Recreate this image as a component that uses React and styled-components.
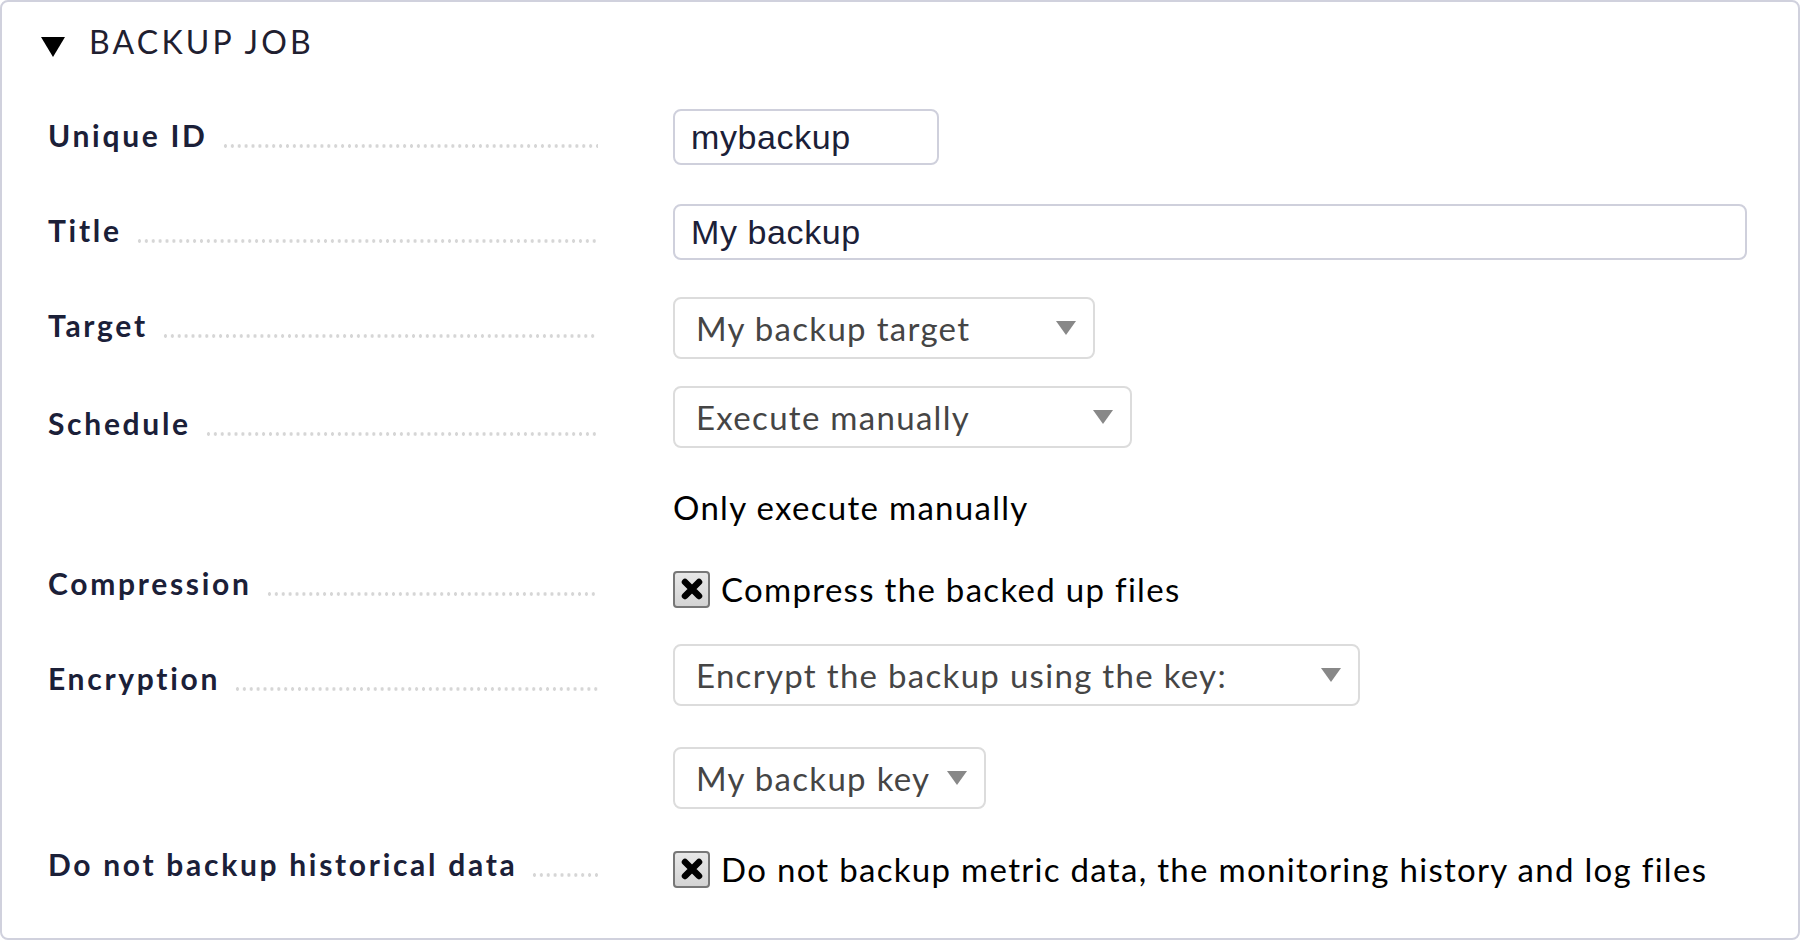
import React from "react";
import styled, { createGlobalStyle } from "styled-components";

const GlobalStyle = createGlobalStyle`
  body {
    margin: 0;
    background: #ffffff;
    font-family: Lato, "Noto Sans", sans-serif;
  }
`;

function Checkbox() {
  return (
    <Box>
      <svg width="22" height="22" viewBox="0 0 22 22">
        <path d="M4 4 L18 18 M18 4 L4 18" stroke="#000" strokeWidth="6.5" strokeLinecap="round" />
      </svg>
    </Box>
  );
}

function Select({ value, width }) {
  return (
    <SelectBox $width={width}>
      <span>{value}</span>
      <Arrow />
    </SelectBox>
  );
}

function Field({ label, offset = 10, gap, children }) {
  return (
    <Row $gap={gap}>
      <Label $offset={offset}>
        <span>{label}</span>
        <Dots />
      </Label>
      <Content>{children}</Content>
    </Row>
  );
}

export default function App() {
  return (
    <>
      <GlobalStyle />
      <Panel>
        <Header>
          <Toggle />
          <h2>BACKUP JOB</h2>
        </Header>
        <Form>
          <Field label="Unique ID" gap={47}>
            <TextInput $width={266}>mybackup</TextInput>
          </Field>
          <Field label="Title" gap={39}>
            <TextInput $width={1074}>My backup</TextInput>
          </Field>
          <Field label="Target" offset={12} gap={37}>
            <Select value="My backup target" width={422} />
          </Field>
          <Field label="Schedule" offset={21} gap={27}>
            <Select value="Execute manually" width={459} />
            <Help>Only execute manually</Help>
          </Field>
          <Field label="Compression" offset={5} gap={35}>
            <CheckLine>
              <Checkbox />
              <span>Compress the backed up files</span>
            </CheckLine>
          </Field>
          <Field label="Encryption" offset={18} gap={35}>
            <Select value="Encrypt the backup using the key:" width={687} />
            <Nested>
              <Select value="My backup key" width={313} />
            </Nested>
          </Field>
          <Field label="Do not backup historical data" offset={6} gap={33}>
            <CheckLine>
              <Checkbox />
              <span>Do not backup metric data, the monitoring history and log files</span>
            </CheckLine>
          </Field>
        </Form>
      </Panel>
    </>
  );
}

const Panel = styled.div`
  box-sizing: border-box;
  width: 1800px;
  height: 940px;
  border: 2px solid #d0d1dd;
  border-radius: 8px;
  padding-top: 20px;
`;

const Header = styled.div`
  display: flex;
  align-items: center;
  gap: 24px;
  padding-left: 39px;
  height: 40px;

  h2 {
    margin: 0;
    font-size: 32px;
    line-height: 40px;
    font-weight: 400;
    letter-spacing: 3.2px;
    color: #1f2030;
  }
`;

const Toggle = styled.div`
  width: 0;
  height: 0;
  margin-top: 10px;
  border-left: 12px solid transparent;
  border-right: 12px solid transparent;
  border-top: 20px solid #000;
`;

const Form = styled.div`
  padding-left: 46px;
`;

const Row = styled.div`
  display: grid;
  grid-template-columns: 550px 1fr;
  column-gap: 75px;
  align-items: start;
  margin-top: ${(p) => p.$gap}px;
`;

const Label = styled.div`
  display: flex;
  align-items: flex-end;
  padding-top: ${(p) => p.$offset}px;
  font-size: 30px;
  line-height: 32px;
  font-weight: 700;
  letter-spacing: 2.7px;
  color: #1b2038;
  white-space: nowrap;
`;

const Dots = styled.div`
  flex: 1;
  height: 4px;
  margin: 0 0 3px 14px;
  background-image: radial-gradient(circle, #d6d6d6 1.5px, transparent 2px);
  background-size: 6.9px 4px;
  background-repeat: repeat-x;
`;

const Content = styled.div`
  display: flex;
  flex-direction: column;
  align-items: flex-start;
`;

const TextInput = styled.div`
  box-sizing: border-box;
  width: ${(p) => p.$width}px;
  height: 56px;
  border: 2px solid #cfd0dc;
  border-radius: 8px;
  padding-left: 16px;
  display: flex;
  align-items: center;
  font-family: "Liberation Sans", Arial, sans-serif;
  font-size: 34px;
  letter-spacing: 0.6px;
  color: #1b2038;
`;

const SelectBox = styled.div`
  box-sizing: border-box;
  width: ${(p) => p.$width}px;
  height: 62px;
  border: 2px solid #dcdcdc;
  border-radius: 8px;
  padding: 0 17px 0 21px;
  display: flex;
  align-items: center;
  justify-content: space-between;
  font-size: 33px;
  letter-spacing: 1.3px;
  color: #454545;
`;

const Arrow = styled.div`
  flex-shrink: 0;
  width: 0;
  height: 0;
  border-left: 10.5px solid transparent;
  border-right: 10.5px solid transparent;
  border-top: 14px solid #888888;
`;

const Help = styled.div`
  margin-top: 39px;
  font-size: 33px;
  line-height: 40px;
  letter-spacing: 1.3px;
  color: #000;
`;

const Nested = styled.div`
  margin-top: 41px;
`;

const CheckLine = styled.div`
  display: flex;
  align-items: center;
  gap: 11px;
  padding-top: 7px;
  font-size: 33px;
  line-height: 40px;
  letter-spacing: 1.3px;
  color: #000;
`;

const Box = styled.div`
  box-sizing: border-box;
  flex-shrink: 0;
  width: 37px;
  height: 37px;
  border: 2px solid #777777;
  border-radius: 4px;
  background: linear-gradient(#e8e8e8, #d4d4d4);
  display: flex;
  align-items: center;
  justify-content: center;
`;
